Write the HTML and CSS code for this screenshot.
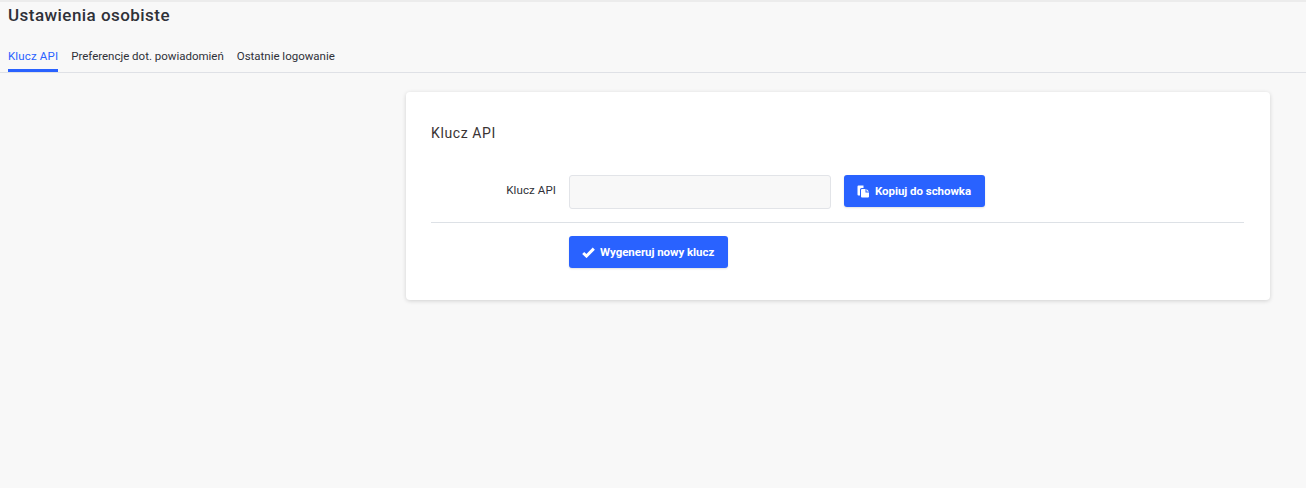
FILE: index.html
```html
<!DOCTYPE html>
<html lang="pl">

<head>
    <meta charset="UTF-8">
    <meta name="viewport" content="width=device-width, initial-scale=1.0">
    <title>Ustawienia osobiste</title>
    <link rel="stylesheet" href="styles.css">
</head>

<body>
    <div class="topline"></div>
    <h1 class="page-title">Ustawienia osobiste</h1>
    <ul class="tabs">
        <li class="tab active">Klucz API</li>
        <li class="tab">Preferencje dot. powiadomień</li>
        <li class="tab">Ostatnie logowanie</li>
    </ul>
    <div class="content">
        <div class="card">
            <h2 class="card-title">Klucz API</h2>
            <div class="form-row">
                <label class="form-label" for="apikey">Klucz API</label>
                <input class="form-input" type="text" id="apikey" readonly>
                <button class="btn" type="button">
                    <svg class="icon" viewBox="0 0 13 13" width="13" height="13">
                        <path fill="#fff" d="M1.500 0.500H6.500V3H4.500A1.500 1.500 0 0 0 3 4.500V10.500H1.500A1 1 0 0 1 .5 9.500V1.500A1 1 0 0 1 1.500 .5z"/>
                        <path fill="#fff" d="M5 4H8.500V7.500H12V11.500A1 1 0 0 1 11 12.500H5A1 1 0 0 1 4 11.500V5A1 1 0 0 1 5 4z"/>
                        <path fill="#fff" d="M9.500 4L12 6.500H9.500z"/>
                    </svg>
                    Kopiuj do schowka
                </button>
            </div>
            <div class="form-actions">
                <button class="btn" type="button">
                    <svg class="icon" viewBox="0 0 14 12" width="13" height="11">
                        <path fill="none" stroke="#fff" stroke-width="3.200" d="M1.200 6.500l3.600 3.400L12.800 1.800"/>
                    </svg>
                    Wygeneruj nowy klucz
                </button>
            </div>
        </div>
    </div>
</body>
</html>
```

FILE: styles.css
```css
* {
    box-sizing: border-box;
}

html,
body {
    height: 100%;
}

body {
    margin: 0;
    background-color: #f8f8f8;
    color: #2f3138;
    font-family: "Roboto", "Liberation Sans", sans-serif;
}

.topline {
    height: 2px;
    background-color: #ececec;
}

.page-title {
    margin: 0;
    padding: 0 8px;
    height: 42px;
    font-size: 17px;
    line-height: 26px;
    font-weight: 500;
    letter-spacing: 0.45px;
}

.tabs {
    display: flex;
    gap: 13px;
    margin: 0;
    padding: 0 8px;
    height: 29px;
    list-style: none;
    border-bottom: 1px solid #dfe1e6;
}

.tab {
    height: 28px;
    padding-top: 5px;
    font-size: 11.5px;
    line-height: 15px;
    letter-spacing: -0.01px;
    color: #2f3138;
}

.tab.active {
    letter-spacing: 0.15px;
    color: #2962ff;
    border-bottom: 3px solid #2962ff;
}

.content {
    padding: 19px 36px 0 406px;
}

.card {
    height: 208px;
    padding: 32px 26px 0 25px;
    background-color: #fff;
    border-radius: 4px;
    box-shadow: 0 1px 4px rgba(0, 0, 0, 0.16);
}

.card-title {
    margin: 0 0 33px;
    font-size: 14px;
    line-height: 18px;
    font-weight: 400;
    letter-spacing: 0.6px;
    color: #3a3434;
}

.form-row {
    display: flex;
    align-items: flex-start;
    padding-bottom: 13px;
    border-bottom: 1px solid #dde1e6;
}

.form-label {
    width: 125px;
    padding-top: 8px;
    font-size: 11.5px;
    line-height: 15px;
    letter-spacing: 0.1px;
    text-align: right;
}

.form-input {
    width: 262px;
    height: 34px;
    margin: 0 13px;
    background-color: #f8f8f8;
    border: 1px solid #e2e4e8;
    border-radius: 3px;
}

.btn {
    display: flex;
    align-items: center;
    gap: 5px;
    height: 32px;
    padding: 0 14px 0 13px;
    border: 0;
    border-radius: 3px;
    background-color: #2962ff;
    color: #fff;
    font-family: inherit;
    font-size: 11.5px;
    font-weight: 700;
    letter-spacing: -0.05px;
    box-shadow: 0 1px 2px rgba(0, 0, 0, 0.12);
}

.form-actions {
    display: flex;
    padding: 13px 0 0 138px;
}
```
